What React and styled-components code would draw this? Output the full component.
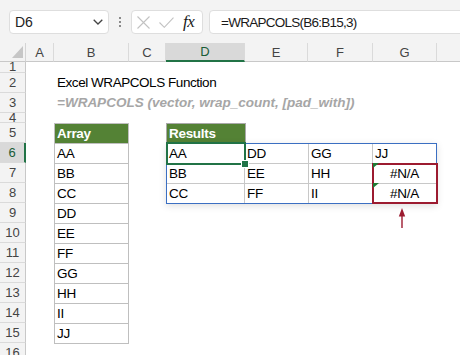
import React from 'react';
import styled, { createGlobalStyle } from 'styled-components';

const GlobalStyle = createGlobalStyle`
  html, body { margin: 0; padding: 0; background: #ffffff; }
  body { width: 460px; height: 355px; overflow: hidden; font-family: "Liberation Sans", Arial, sans-serif; }
  * { box-sizing: border-box; }
`;

const Page = styled.div`
  width: 460px;
  height: 355px;
  overflow: hidden;
  background: #ffffff;
  display: flex;
  flex-direction: column;
`;

/* ---------- formula bar ---------- */
const Toolbar = styled.div`
  flex: none;
  height: 43px;
  background: #f3f3f3;
  display: flex;
  align-items: flex-start;
  padding: 10px 0 0 9px;
`;

const Box = styled.div`
  height: 24px;
  background: #ffffff;
  border: 1px solid #dedede;
  border-radius: 4px;
  display: flex;
  align-items: center;
`;

const NameBox = styled(Box)`
  width: 100px;
  justify-content: space-between;
  padding: 0 5px 0 5px;
  font-size: 14px;
  letter-spacing: -0.2px;
  color: #222;
`;

const Dots = styled.div`
  margin: 7px 0 0 10px;
  display: flex;
  flex-direction: column;
  gap: 2px;
  span {
    width: 2px;
    height: 2px;
    background: #8a8a8a;
  }
`;

const FxBox = styled(Box)`
  width: 72px;
  margin-left: 10px;
  padding-left: 5px;
  gap: 9px;
`;

const Fx = styled.span`
  font-family: "Liberation Serif", "Times New Roman", serif;
  font-style: italic;
  font-size: 17px;
  color: #1a1a1a;
  letter-spacing: -0.5px;
`;

const FormulaBox = styled(Box)`
  flex: 1;
  margin-left: 6px;
  margin-right: -20px;
  padding-left: 11px;
  font-size: 13.5px;
  letter-spacing: -0.75px;
  color: #1a1a1a;
`;

/* ---------- sheet ---------- */
const Sheet = styled.div`
  flex: none;
  display: grid;
  grid-template-columns: 26px 28px 75px 37px 79px 63px 65px 64px 64px;
  grid-template-rows: 19px 11px 20px 20px 10px repeat(12, 20px);
  font-size: 13.5px;
  letter-spacing: -0.3px;
  color: #000;
`;

const Corner = styled.div`
  grid-column: 1;
  grid-row: 1;
  background: #f3f3f3;
  border-right: 1px solid #d4d4d4;
  border-bottom: 1px solid #c8c8c8;
  display: flex;
  align-items: flex-end;
  justify-content: flex-end;
  padding: 0 2px 3px 0;
`;

const ColHead = styled.div`
  grid-row: 1;
  grid-column: ${p => p.$col};
  display: flex;
  align-items: center;
  justify-content: center;
  background: ${p => (p.$active ? '#d9d9d9' : '#f3f3f3')};
  border-right: 1px solid #dadada;
  border-bottom: ${p => (p.$active ? '2px solid #217346' : '1px solid #c8c8c8')};
  color: ${p => (p.$active ? '#185c37' : '#444')};
  font-size: 13px;
  letter-spacing: 0;
`;

const RowHead = styled.div`
  grid-column: 1;
  grid-row: ${p => p.$row};
  display: flex;
  align-items: center;
  justify-content: center;
  overflow: hidden;
  background: ${p => (p.$active ? '#d9d9d9' : '#f3f3f3')};
  border-bottom: 1px solid #dadada;
  border-right: ${p => (p.$active ? '2px solid #217346' : '1px solid #c8c8c8')};
  color: ${p => (p.$active ? '#185c37' : '#444')};
  font-size: 13px;
  letter-spacing: 0;
  line-height: 16px;
`;

const SheetText = styled.div`
  grid-column: 3 / span 7;
  grid-row: ${p => p.$row};
  padding-left: 3px;
  line-height: 20px;
  white-space: nowrap;
  letter-spacing: ${p => (p.$syntax ? '0' : '-0.45px')};
  font-weight: ${p => (p.$syntax ? 'bold' : 'normal')};
  font-style: ${p => (p.$syntax ? 'italic' : 'normal')};
  color: ${p => (p.$syntax ? '#a6a6a6' : '#000')};
`;

const ArrayBox = styled.div`
  grid-column: 3;
  grid-row: 6 / span 11;
  align-self: start;
  display: flex;
  flex-direction: column;
  border: 1px solid #bfbfbf;
`;

const HeadCell = styled.div`
  height: 20px;
  background: #548235;
  color: #ffffff;
  font-weight: bold;
  line-height: 19px;
  padding-left: 2px;
  border-bottom: 1px solid #bfbfbf;
`;

const ArrayCell = styled.div`
  height: 20px;
  line-height: 19px;
  padding-left: 2px;
  border-bottom: 1px solid #bfbfbf;
  &:last-child {
    height: 19px;
    border-bottom: none;
  }
`;

const ResultsHeader = styled.div`
  grid-column: 5;
  grid-row: 6;
  width: 80px;
  height: 20px;
  background: #548235;
  border: 1px solid #a9a9a9;
  border-bottom: none;
  color: #ffffff;
  font-weight: bold;
  line-height: 19px;
  padding-left: 2px;
`;

const ResultsGrid = styled.div`
  grid-column: 5 / span 4;
  grid-row: 7 / span 3;
  align-self: start;
  display: grid;
  grid-template-columns: 78px 64px 64px 1fr;
  grid-template-rows: 20px 20px 19px;
  border: 1px solid #3b6fc2;
  background: #ffffff;
  box-shadow: 0 2px 7px rgba(0, 0, 0, 0.13);
`;

const RCell = styled.div`
  grid-column: ${p => p.$c};
  grid-row: ${p => p.$r};
  position: relative;
  border-right: ${p => (p.$c < 4 ? '1px solid #c8c8c8' : 'none')};
  border-bottom: ${p => (p.$r < 3 ? '1px solid #c8c8c8' : 'none')};
  line-height: 19px;
  padding-left: ${p => (p.$error ? '0' : '2px')};
  text-align: ${p => (p.$error ? 'center' : 'left')};
  white-space: nowrap;
`;

const ErrorFlag = styled.span`
  position: absolute;
  top: -1px;
  left: 0;
  width: 0;
  height: 0;
  border-top: 5px solid #1e7b34;
  border-right: 6px solid transparent;
  z-index: 3;
`;

const Selection = styled.div`
  grid-column: 1;
  grid-row: 1;
  margin: -2px -1px -1px -1px;
  border: 2px solid #217346;
  position: relative;
  z-index: 1;
  pointer-events: none;
`;

const FillHandle = styled.span`
  position: absolute;
  right: -4px;
  bottom: -4px;
  width: 6px;
  height: 6px;
  background: #217346;
  box-shadow: 0 0 0 1px #ffffff;
`;

const ErrorRange = styled.div`
  grid-column: 4;
  grid-row: 2 / span 2;
  margin: -1px -2px -1px -1px;
  border: 2px solid #9c1b30;
  position: relative;
  z-index: 1;
  pointer-events: none;
`;

const Arrow = styled.svg`
  grid-column: 8;
  grid-row: 10 / span 2;
  margin: 5px 0 0 25px;
  display: block;
`;

const COLS = ['A', 'B', 'C', 'D', 'E', 'F', 'G', 'H'];
const ROWS = Array.from({ length: 16 }, (_, i) => i + 1);
const ARRAY = ['AA', 'BB', 'CC', 'DD', 'EE', 'FF', 'GG', 'HH', 'II', 'JJ'];
const RESULTS = [
  ['AA', 'DD', 'GG', 'JJ'],
  ['BB', 'EE', 'HH', '#N/A'],
  ['CC', 'FF', 'II', '#N/A'],
];

export default function App() {
  return (
    <Page>
      <GlobalStyle />
      <Toolbar>
        <NameBox>
          <span>D6</span>
          <svg width="10" height="6" viewBox="0 0 10 6">
            <polyline points="0.7,0.7 5,5 9.3,0.7" fill="none" stroke="#444" strokeWidth="1.3" />
          </svg>
        </NameBox>
        <Dots>
          <span />
          <span />
          <span />
        </Dots>
        <FxBox>
          <svg width="13" height="13" viewBox="0 0 13 13">
            <path d="M0.5 0.5 L12.5 12.5 M12.5 0.5 L0.5 12.5" stroke="#c2c2c2" strokeWidth="1.1" fill="none" />
          </svg>
          <svg width="15" height="11" viewBox="0 0 15 11">
            <polyline points="0.5,5.5 5.3,10.3 14.5,0.7" fill="none" stroke="#c2c2c2" strokeWidth="1.1" />
          </svg>
          <Fx>fx</Fx>
        </FxBox>
        <FormulaBox>=WRAPCOLS(B6:B15,3)</FormulaBox>
      </Toolbar>

      <Sheet>
        <Corner>
          <svg width="11" height="12" viewBox="0 0 11 12">
            <polygon points="11,0 11,12 0,12" fill="#c6c6c6" />
          </svg>
        </Corner>
        {COLS.map((c, i) => (
          <ColHead key={c} $col={i + 2} $active={c === 'D'}>
            {c}
          </ColHead>
        ))}
        {ROWS.map(r => (
          <RowHead key={r} $row={r + 1} $active={r === 6}>
            {r}
          </RowHead>
        ))}

        <SheetText $row={3}>Excel WRAPCOLS Function</SheetText>
        <SheetText $row={4} $syntax>
          =WRAPCOLS (vector, wrap_count, [pad_with])
        </SheetText>

        <ArrayBox>
          <HeadCell>Array</HeadCell>
          {ARRAY.map(v => (
            <ArrayCell key={v}>{v}</ArrayCell>
          ))}
        </ArrayBox>

        <ResultsHeader>Results</ResultsHeader>
        <ResultsGrid>
          {RESULTS.map((row, ri) =>
            row.map((v, ci) => (
              <RCell key={`${ri}-${ci}`} $r={ri + 1} $c={ci + 1} $error={v === '#N/A'}>
                {v === '#N/A' && <ErrorFlag />}
                {v}
              </RCell>
            ))
          )}
          <Selection>
            <FillHandle />
          </Selection>
          <ErrorRange />
        </ResultsGrid>

        <Arrow width="8" height="20" viewBox="0 0 8 20">
          <polygon points="4,0 0.8,8.5 7.2,8.5" fill="#9c1b30" />
          <line x1="4" y1="7" x2="4" y2="20" stroke="#9c1b30" strokeWidth="1.4" />
        </Arrow>
      </Sheet>
    </Page>
  );
}
